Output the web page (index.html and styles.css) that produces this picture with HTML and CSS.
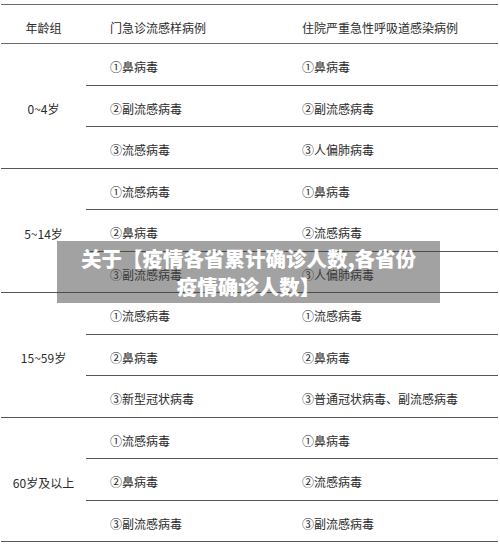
FILE: index.html
```html
<!DOCTYPE html>
<html lang="zh-CN">
<head>
<meta charset="utf-8">
<title>关于【疫情各省累计确诊人数,各省份疫情确诊人数】</title>
<link rel="stylesheet" href="styles.css">
</head>
<body>
<div class="page">
  <div class="table">
    <div class="head">
      <div class="hcell age-h">年龄组</div>
      <div class="hcell">门急诊流感样病例</div>
      <div class="hcell">住院严重急性呼吸道感染病例</div>
    </div>

    <div class="group">
      <div class="age">0~4岁</div>
      <div class="subs">
        <div class="sub"><div class="cell">①鼻病毒</div><div class="cell">①鼻病毒</div></div>
        <div class="sub"><div class="cell">②副流感病毒</div><div class="cell">②副流感病毒</div></div>
        <div class="sub"><div class="cell">③流感病毒</div><div class="cell">③人偏肺病毒</div></div>
      </div>
    </div>

    <div class="group">
      <div class="age">5~14岁</div>
      <div class="subs">
        <div class="sub"><div class="cell">①流感病毒</div><div class="cell">①鼻病毒</div></div>
        <div class="sub"><div class="cell">②鼻病毒</div><div class="cell">②流感病毒</div></div>
        <div class="sub"><div class="cell">③副流感病毒</div><div class="cell">③人偏肺病毒</div></div>
      </div>
    </div>

    <div class="group">
      <div class="age">15~59岁</div>
      <div class="subs">
        <div class="sub"><div class="cell">①流感病毒</div><div class="cell">①流感病毒</div></div>
        <div class="sub"><div class="cell">②鼻病毒</div><div class="cell">②鼻病毒</div></div>
        <div class="sub"><div class="cell">③新型冠状病毒</div><div class="cell">③普通冠状病毒、副流感病毒</div></div>
      </div>
    </div>

    <div class="group">
      <div class="age">60岁及以上</div>
      <div class="subs">
        <div class="sub"><div class="cell">①流感病毒</div><div class="cell">①鼻病毒</div></div>
        <div class="sub"><div class="cell">②鼻病毒</div><div class="cell">②流感病毒</div></div>
        <div class="sub"><div class="cell">③副流感病毒</div><div class="cell">③副流感病毒</div></div>
      </div>
    </div>
  </div>

  <div class="caption">关于【疫情各省累计确诊人数,各省份<br>疫情确诊人数】</div>
</div>
</body>
</html>
```

FILE: styles.css
```css
* { box-sizing: border-box; }

html, body {
  margin: 0;
  padding: 0;
  background: #ffffff;
}

body {
  font-family: "Noto Sans CJK SC", "Noto Sans", sans-serif;
  color: #2b2b2b;
  font-size: 12px;
}

.page {
  position: relative;
  width: 500px;
  height: 546px;
  padding-top: 4px;
  padding-left: 1px;
}

.table {
  width: 497px;
}

.head {
  display: grid;
  grid-template-columns: 85px 192px 1fr;
  height: 40px;
  border-top: 1px solid #6a6a6a;
  border-bottom: 1px solid #6a6a6a;
}

.hcell {
  display: flex;
  align-items: center;
  padding-top: 6px;
  padding-left: 24px;
  white-space: nowrap;
}

.hcell.age-h {
  justify-content: center;
  padding-left: 0;
}

.group {
  display: grid;
  grid-template-columns: 85px 1fr;
}

.age {
  display: flex;
  align-items: center;
  justify-content: center;
  padding-top: 6px;
  border-bottom: 1px solid #555555;
  white-space: nowrap;
}

.subs {
  display: flex;
  flex-direction: column;
}

.sub {
  display: grid;
  grid-template-columns: 192px 1fr;
  height: 41.5px;
  border-bottom: 1px solid #555555;
}

.cell {
  display: flex;
  align-items: center;
  padding-top: 5px;
  padding-left: 24px;
  white-space: nowrap;
}

.caption {
  position: absolute;
  left: 57px;
  top: 241px;
  width: 383px;
  height: 62px;
  padding-top: 3px;
  background: rgba(70, 70, 70, 0.5);
  color: #ffffff;
  font-weight: 900;
  font-size: 20.5px;
  line-height: 28px;
  text-align: center;
  white-space: nowrap;
}
```
